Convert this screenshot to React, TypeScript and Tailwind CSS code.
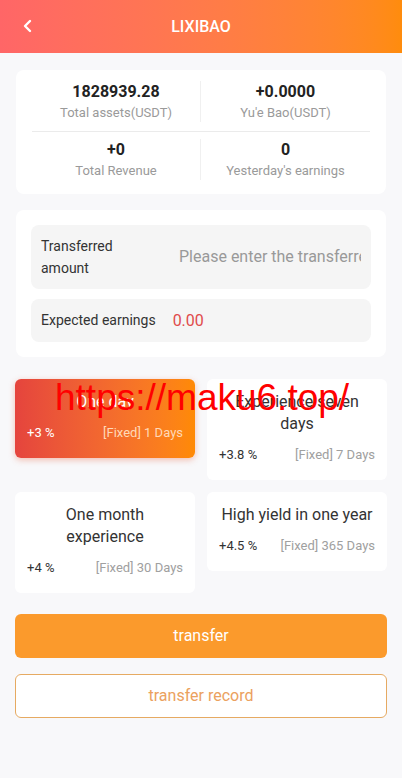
import React from "react";

const stats = [
  [
    { value: "1828939.28", label: "Total assets(USDT)" },
    { value: "+0.0000", label: "Yu'e Bao(USDT)" },
  ],
  [
    { value: "+0", label: "Total Revenue" },
    { value: "0", label: "Yesterday's earnings" },
  ],
];

const products = [
  { title: "One day", rate: "+3 %", term: "[Fixed] 1 Days", active: true },
  { title: "Experience seven days", rate: "+3.8 %", term: "[Fixed] 7 Days" },
  { title: "One month experience", rate: "+4 %", term: "[Fixed] 30 Days" },
  { title: "High yield in one year", rate: "+4.5 %", term: "[Fixed] 365 Days" },
];

export default function App() {
  return (
    <div
      className="relative min-h-[778px] bg-[#f8f8fa]"
      style={{ fontFamily: "Roboto, 'Noto Sans', sans-serif" }}
    >
      {/* header */}
      <div className="relative flex h-[53px] items-center justify-center bg-gradient-to-r from-[#ff6667] to-[#ff8c0c]">
        <svg
          className="absolute left-[21px] top-[19px]"
          width="12"
          height="14"
          viewBox="0 0 12 14"
          fill="none"
        >
          <path d="M9 2L4 7l5 5" stroke="#fff" strokeWidth="2.4" strokeLinecap="round" strokeLinejoin="round" />
        </svg>
        <span className="text-[16px] font-medium text-white">LIXIBAO</span>
      </div>

      {/* stats */}
      <div className="mx-4 mt-[17px] rounded-lg bg-white px-4 pb-[14px] pt-[11px]">
        {stats.map((row, i) => (
          <div
            key={i}
            className={`grid grid-cols-2 ${i === 0 ? "border-b border-[#ebebeb] pb-[9px]" : "pt-[7px]"}`}
          >
            {row.map((s, j) => (
              <div key={s.label} className={`flex flex-col items-center ${j === 0 ? "border-r border-[#f0f0f0]" : ""}`}>
                <span className="text-[16px] font-bold leading-[22px] text-[#222]">{s.value}</span>
                <span className="mt-px text-[13px] leading-[18px] text-[#9a9a9a]">{s.label}</span>
              </div>
            ))}
          </div>
        ))}
      </div>

      {/* form */}
      <div className="mx-4 mt-4 flex flex-col gap-[10px] rounded-lg bg-white p-[15px]">
        <div className="flex h-[64px] items-center overflow-hidden rounded-lg bg-[#f5f5f5] pl-[10px] pr-[10px]">
          <span className="w-[138px] shrink-0 text-[14px] leading-[22px] text-[#333]">
            Transferred
            <br />
            amount
          </span>
          <input
            className="min-w-0 flex-1 bg-transparent text-[16px] text-[#333] outline-none placeholder:text-[#999]"
            placeholder="Please enter the transferred amount"
          />
        </div>
        <div className="flex h-[43px] items-center rounded-lg bg-[#f5f5f5] pl-[10px]">
          <span className="text-[14px] text-[#333]">Expected earnings</span>
          <span className="ml-[17px] text-[16px] text-[#e04b4b]">0.00</span>
        </div>
      </div>

      {/* products */}
      <div className="mt-[22px] grid grid-cols-2 items-start gap-3 px-[15px]">
        {products.map((p) => (
          <div
            key={p.title}
            className={`rounded-md px-3 pb-4 pt-3 ${
              p.active
                ? "bg-gradient-to-r from-[#e5443d] to-[#ff8a04] shadow-[0_2px_6px_rgba(230,80,40,0.35)]"
                : "bg-white"
            }`}
          >
            <div
              className={`text-center text-[16px] leading-[22px] ${p.active ? "text-white" : "text-[#333]"}`}
            >
              {p.title}
            </div>
            <div className="mt-[11px] flex items-center justify-between text-[13px] leading-[18px]">
              <span className={p.active ? "text-white" : "text-[#333]"}>{p.rate}</span>
              <span className={p.active ? "text-[#ffd9b8]" : "text-[#a0a0a0]"}>{p.term}</span>
            </div>
          </div>
        ))}
      </div>

      {/* buttons */}
      <div className="mt-[21px] flex flex-col gap-4 px-[15px]">
        <button className="h-[44px] rounded-md bg-[#fb9a2c] text-[16px] text-white">transfer</button>
        <button className="h-[44px] rounded-md border border-[#e6aa62] bg-white text-[16px] text-[#eba15e]">
          transfer record
        </button>
      </div>

      {/* watermark */}
      <div
        className="pointer-events-none absolute left-[55px] top-[376px] text-[37px] leading-[44px] text-[#ff0000]"
        style={{ fontFamily: "'Liberation Sans', Arial, sans-serif" }}
      >
        https://maku6.top/
      </div>
    </div>
  );
}
